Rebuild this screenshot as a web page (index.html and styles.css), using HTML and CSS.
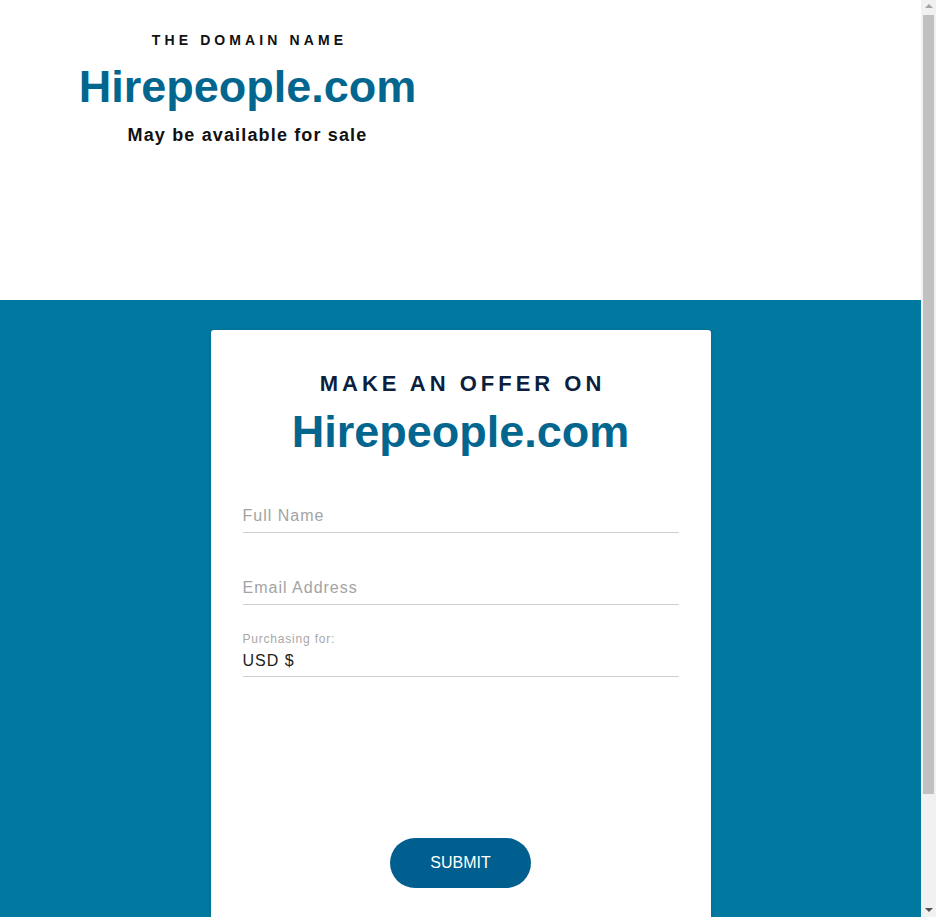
FILE: index.html
```html
<!DOCTYPE html>
<html lang="en">
<head>
<meta charset="utf-8">
<title>Hirepeople.com</title>
<link rel="stylesheet" href="styles.css">
</head>
<body>
<div class="page">
  <header class="hero">
    <div class="hero-left">
      <p class="eyebrow">THE DOMAIN NAME</p>
      <h1 class="domain">Hirepeople.com</h1>
      <p class="sale">May be available for sale</p>
    </div>
  </header>
  <section class="offer">
    <form class="card" onsubmit="return false;">
      <p class="card-eyebrow">MAKE AN OFFER ON</p>
      <h2 class="card-domain">Hirepeople.com</h2>
      <div class="field first">
        <input class="input" type="text" placeholder="Full Name">
      </div>
      <div class="field">
        <input class="input" type="email" placeholder="Email Address">
      </div>
      <div class="field currency">
        <div class="label">Purchasing for:</div>
        <div class="value">USD $</div>
      </div>
      <div class="actions">
        <button class="submit" type="submit">SUBMIT</button>
      </div>
    </form>
  </section>
</div>
<div class="scrollbar" aria-hidden="true">
  <span class="arrow up"></span>
  <span class="thumb"></span>
  <span class="arrow down"></span>
</div>
</body>
</html>
```

FILE: styles.css
```css
* { box-sizing: border-box; }
html, body { margin: 0; padding: 0; }
html { scrollbar-width: none; }
body {
  font-family: "Liberation Sans", Arial, Helvetica, sans-serif;
  color: #111;
  background: #fff;
}
p, h1, h2 { margin: 0; }

.page { width: 921px; }

.hero {
  height: 300px;
  display: grid;
  grid-template-columns: 495px 1fr;
}
.hero-left {
  text-align: center;
  padding-top: 32px;
}
.eyebrow {
  font-size: 14px;
  line-height: 16px;
  font-weight: bold;
  letter-spacing: 4.1px;
  padding-left: 4px;
  color: #111;
}
.domain {
  margin-top: 13px;
  font-size: 45px;
  line-height: 52px;
  font-weight: bold;
  color: #03668f;
}
.sale {
  margin-top: 11px;
  font-size: 18px;
  line-height: 22px;
  font-weight: bold;
  letter-spacing: 1.15px;
  color: #111;
}

.offer {
  background: #01789f;
  padding: 30px 0 57px;
}
.card {
  width: 500px;
  margin: 0 auto;
  background: #fff;
  border-radius: 3px;
  box-shadow: 0 1px 4px rgba(0, 0, 0, 0.12);
  padding: 41px 32px 100px;
  text-align: center;
}
.card-eyebrow {
  font-size: 22px;
  line-height: 26px;
  font-weight: bold;
  letter-spacing: 4px;
  padding-left: 4px;
  color: #0b1f3f;
}
.card-domain {
  margin-top: 9px;
  font-size: 45px;
  line-height: 52px;
  font-weight: bold;
  color: #03668f;
}
.field {
  text-align: left;
  margin-top: 45px;
}
.field.first { margin-top: 48px; }
.field.currency {
  margin-top: 27px;
  border-bottom: 1px solid #cfcfcf;
  padding-bottom: 5px;
}
.input {
  display: block;
  width: 100%;
  height: 27px;
  margin: 0;
  padding: 0 0 6px;
  border: 0;
  border-bottom: 1px solid #cfcfcf;
  outline: none;
  background: transparent;
  font-family: inherit;
  font-size: 16px;
  line-height: 20px;
  letter-spacing: 1px;
  color: #222;
}
.input::placeholder { color: #a3a3a3; opacity: 1; }
.label {
  font-size: 12px;
  line-height: 14px;
  letter-spacing: 0.8px;
  color: #a8a8a8;
}
.value {
  margin-top: 5px;
  font-size: 16px;
  line-height: 20px;
  letter-spacing: 1px;
  color: #1c1c1c;
}
.actions {
  margin-top: 161px;
  display: flex;
  justify-content: center;
}
.submit {
  width: 141px;
  height: 50px;
  border: 0;
  border-radius: 25px;
  background: #005f8e;
  color: #fff;
  font-family: inherit;
  font-size: 16px;
  cursor: pointer;
}

/* drawn browser scrollbar overlay */
.scrollbar {
  position: fixed;
  top: 0;
  right: 0;
  width: 15px;
  height: 100%;
  background: #f1f1f1;
}
.thumb {
  position: absolute;
  top: 15px;
  left: 2px;
  width: 11px;
  height: 779px;
  background: #c1c1c1;
}
.arrow {
  position: absolute;
  left: 4px;
  width: 0;
  height: 0;
  border-left: 4px solid transparent;
  border-right: 4px solid transparent;
}
.arrow.up {
  top: 4px;
  border-bottom: 4px solid #a3a3a3;
}
.arrow.down {
  bottom: 5px;
  border-top: 4px solid #505050;
}
```
